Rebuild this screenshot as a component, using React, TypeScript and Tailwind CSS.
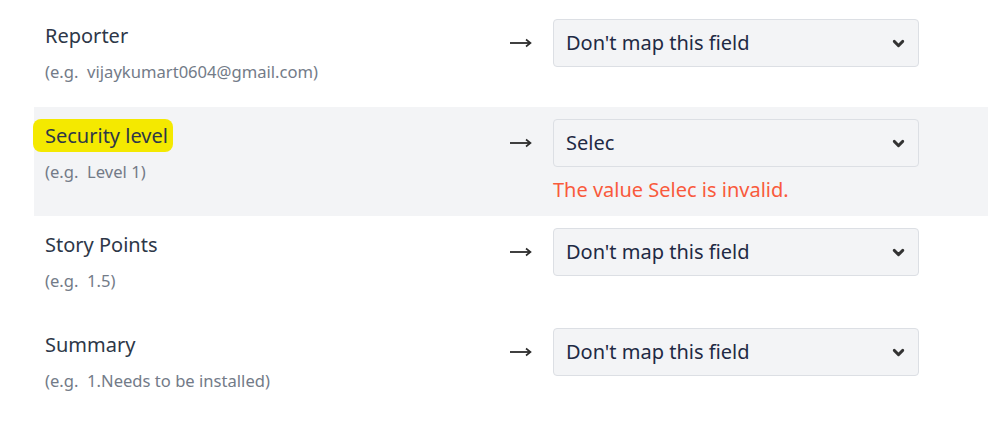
import { ChevronDown } from "lucide-react";

type Field = {
  name: string;
  example: string;
  value: string;
  error?: string;
  highlight?: boolean;
};

const fields: Field[] = [
  { name: "Reporter", example: "vijaykumart0604@gmail.com", value: "Don't map this field" },
  {
    name: "Security level",
    example: "Level 1",
    value: "Selec",
    error: "The value Selec is invalid.",
    highlight: true,
  },
  { name: "Story Points", example: "1.5", value: "Don't map this field" },
  { name: "Summary", example: "1.Needs to be installed", value: "Don't map this field" },
];

function Arrow() {
  return (
    <svg width="22" height="10" viewBox="0 0 22 10" fill="none" stroke="#2b2b2b">
      <path d="M0 5h20" strokeWidth="1.8" />
      <path d="M16 1.5L20.5 5L16 8.5" strokeWidth="1.6" strokeLinejoin="miter" />
    </svg>
  );
}

function FieldRow({ field }: { field: Field }) {
  return (
    <div
      className={`flex items-start min-h-[100px] py-3 pl-[11px] pr-[69px] ${
        field.error ? "bg-[#f3f4f6]" : ""
      }`}
    >
      <div className="flex-1 pt-[2px]">
        <div className="text-[20px] leading-[30px] text-[#2d3748]">
          {field.highlight ? (
            <span className="-ml-3 pl-3 pr-[5px] py-[3px] bg-[#f4e900] rounded-[8px]">
              {field.name}
            </span>
          ) : (
            field.name
          )}
        </div>
        <div className="mt-[9px] text-[16.6px] leading-[24px] text-[#737b88]">
          (e.g.&nbsp; {field.example})
        </div>
      </div>

      <div className="w-[43px] h-12 flex items-center">
        <Arrow />
      </div>

      <div className="w-[366px]">
        <div className="h-12 flex items-center justify-between pl-3 pr-[11px] bg-[#f3f4f6] border border-[#dcdfe4] rounded-[4px]">
          <span className="text-[20px] text-[#1f2a44]">{field.value}</span>
          <ChevronDown className="w-[17px] h-[17px] text-[#333]" strokeWidth={4} />
        </div>
        {field.error && (
          <div className="mt-[9px] text-[20px] leading-[28px] text-[#f95a3c]">
            {field.error}
          </div>
        )}
      </div>
    </div>
  );
}

export default function App() {
  return (
    <div
      className="w-[988px] h-[424px] bg-white pt-[7px] pl-[34px] overflow-hidden"
      style={{ fontFamily: '"Segoe UI", "Noto Sans", sans-serif' }}
    >
      {fields.map((f) => (
        <FieldRow key={f.name} field={f} />
      ))}
    </div>
  );
}
